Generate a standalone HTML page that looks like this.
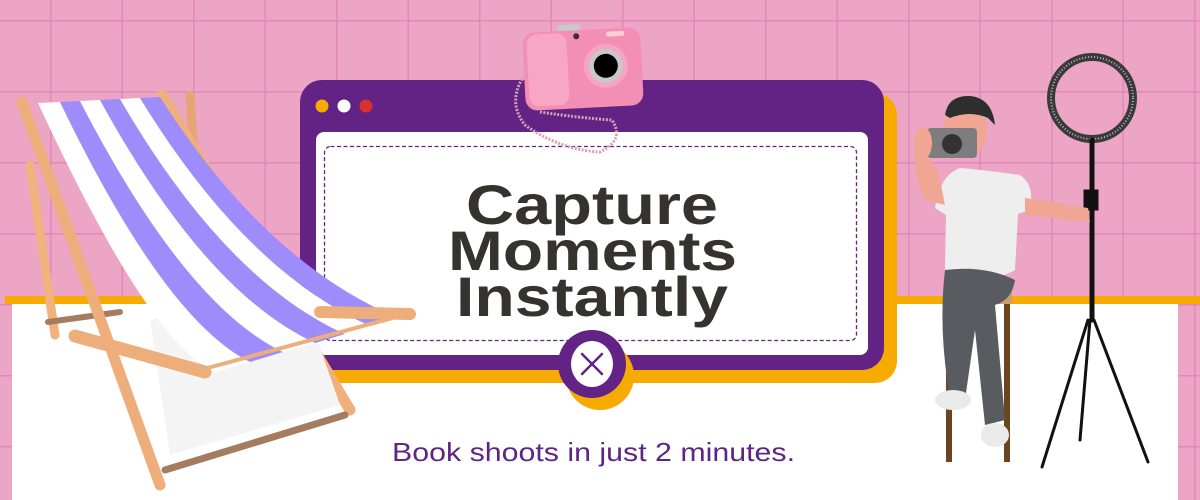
<!DOCTYPE html>
<html><head><meta charset="utf-8"><style>
html,body{margin:0;padding:0;width:1200px;height:500px;overflow:hidden;background:#eda5c6}
svg{display:block}
</style></head><body>
<svg width="1200" height="500" viewBox="0 0 1200 500" xmlns="http://www.w3.org/2000/svg">
<defs>
<pattern id="grid" x="50" y="20" width="71.5" height="71" patternUnits="userSpaceOnUse">
<rect width="71.5" height="71" fill="#eda5c6"/>
<path d="M0 0V71M0 0H71.5" stroke="#e388b8" stroke-width="3"/>
</pattern>
</defs>
<rect width="1200" height="500" fill="url(#grid)"/>
<rect x="5" y="296" width="1195" height="8" fill="#f7ab00"/>
<rect x="12" y="304" width="1166" height="196" fill="#ffffff"/>

<rect x="313" y="93" width="584" height="290" rx="22" fill="#f7ab00"/>
<rect x="300" y="80" width="584" height="290" rx="22" fill="#622384"/>
<circle cx="322" cy="106" r="6.5" fill="#f7ab00"/>
<circle cx="344" cy="106" r="6.5" fill="#ffffff"/>
<circle cx="366" cy="106" r="6.5" fill="#d9302c"/>
<rect x="316" y="132" width="552" height="223" rx="8" fill="#ffffff"/>
<rect x="324.5" y="146.5" width="532" height="194" rx="6" fill="none" stroke="#622384" stroke-width="1.3" stroke-dasharray="4 2.5"/>
<circle cx="600" cy="376" r="34" fill="#f7ab00"/>
<circle cx="592" cy="364" r="34" fill="#622384"/>
<ellipse cx="592" cy="364" rx="21" ry="23" fill="#ffffff"/>
<path d="M582 354L602 374M602 354L582 374" stroke="#622384" stroke-width="2.5" stroke-linecap="round"/>

<g font-family="Liberation Sans, sans-serif" font-weight="bold" font-size="56" fill="#36332f">
<text x="466" y="224" textLength="252" lengthAdjust="spacingAndGlyphs">Capture</text>
<text x="448" y="270" textLength="289" lengthAdjust="spacingAndGlyphs">Moments</text>
<text x="456" y="316" textLength="272" lengthAdjust="spacingAndGlyphs">Instantly</text>
</g>

<text x="392" y="461" textLength="403" lengthAdjust="spacingAndGlyphs" font-family="Liberation Sans, sans-serif" font-size="26" fill="#5e2585">Book shoots in just 2 minutes.</text>

<g transform="rotate(-3 583 70)">
<rect x="560" y="24" width="22" height="8" rx="3" fill="#c9c9cc"/>
<rect x="524" y="30" width="118" height="78" rx="12" fill="#f38fb4"/>
<rect x="528" y="32" width="40" height="72" rx="10" fill="#f7a7c4"/>
<rect x="608" y="33" width="18" height="5" rx="2" fill="#fbcfd6"/>
<circle cx="578" cy="36" r="3" fill="#333"/>
<circle cx="606" cy="67" r="22" fill="#f7a3c2"/>
<circle cx="606" cy="67" r="17" fill="#c8c8cc"/>
<circle cx="606" cy="67" r="12" fill="#000"/>
</g>
<path d="M528 70 Q505 100 525 125 Q560 150 600 152 Q625 140 612 120 Q580 118 540 112" fill="none" stroke="#d9a0b0" stroke-width="3" stroke-dasharray="2 1.5"/>

<g stroke-linecap="round">
<line x1="190" y1="95" x2="210" y2="415" stroke="#e6a673" stroke-width="9"/>
<line x1="30" y1="165" x2="55" y2="335" stroke="#f1b27e" stroke-width="9"/>
<line x1="48" y1="322" x2="120" y2="312" stroke="#a57c60" stroke-width="6"/>
<line x1="162" y1="95" x2="350" y2="410" stroke="#f0b07d" stroke-width="11"/>
<line x1="165" y1="470" x2="345" y2="415" stroke="#a57c60" stroke-width="7"/>
<polygon points="150,320 300,290 340,405 170,455" fill="#f4f4f4"/>
</g>
<g>
<path d="M38 103 Q150 345 215 372 L250 362 Q165 320 60 102Z" fill="#ffffff"/>
<path d="M60 102 Q165 320 250 362 L283 352 Q185 305 80 101Z" fill="#9e8cfb"/>
<path d="M80 101 Q185 305 283 352 L315 343 Q205 292 100 100Z" fill="#ffffff"/>
<path d="M100 100 Q205 292 315 343 L345 334 Q225 280 120 99Z" fill="#9e8cfb"/>
<path d="M120 99 Q225 280 345 334 L370 326 Q245 270 140 98Z" fill="#ffffff"/>
<path d="M140 98 Q245 270 370 326 L398 318 Q265 262 160 97Z" fill="#9e8cfb"/>
</g>
<g stroke-linecap="round">
<line x1="22" y1="102" x2="160" y2="485" stroke="#eeae7b" stroke-width="11"/>
<line x1="75" y1="336" x2="205" y2="372" stroke="#eeae7b" stroke-width="13"/>
<line x1="320" y1="312" x2="410" y2="314" stroke="#eeae7b" stroke-width="12"/>
<line x1="200" y1="370" x2="400" y2="316" stroke="#eeae7b" stroke-width="4"/>
</g>

<circle cx="1092" cy="98" r="41" fill="none" stroke="#3a3a3a" stroke-width="8"/>
<circle cx="1092" cy="98" r="41" fill="none" stroke="#bbbbbb" stroke-width="2" stroke-dasharray="1 2"/>
<g stroke="#111" stroke-linecap="round" fill="none">
<line x1="1092" y1="140" x2="1092" y2="320" stroke-width="5"/>
<line x1="1088" y1="320" x2="1042" y2="467" stroke-width="3"/>
<line x1="1094" y1="320" x2="1148" y2="462" stroke-width="3"/>
<line x1="1090" y1="320" x2="1080" y2="440" stroke-width="3"/>
<rect x="1084" y="190" width="14" height="20" fill="#111"/>
</g>
<g>
<rect x="946" y="300" width="6" height="162" fill="#6b4420"/>
<rect x="1004" y="300" width="6" height="162" fill="#6b4420"/>
<rect x="990" y="290" width="22" height="14" fill="#c9a068"/>
<path d="M960 168 Q985 170 1020 175 Q1035 185 1030 210 L1018 214 L1015 270 Q990 285 945 270 L946 215 L935 208 Q940 175 960 168Z" fill="#eeeeee"/>
<path d="M1025 198 L1088 208 L1090 222 L1025 215Z" fill="#f1a593"/>
<path d="M945 270 Q985 265 1015 280 Q1012 300 995 305 L1005 420 L985 425 L975 330 L965 400 L950 398 Q938 330 945 270Z" fill="#585c61"/>
<ellipse cx="953" cy="400" rx="18" ry="10" fill="#eaeaea"/>
<ellipse cx="995" cy="435" rx="14" ry="12" fill="#eaeaea"/>
<ellipse cx="965" cy="130" rx="22" ry="28" fill="#f1a593"/>
<path d="M945 115 Q948 95 970 96 Q992 98 995 125 L988 118 Q970 110 950 118Z" fill="#2e2e2e"/>
<path d="M915 140 Q912 175 925 200 L945 205 L938 170Z" fill="#f1a593"/>
<rect x="927" y="128" width="50" height="30" rx="4" fill="#7d7d80"/>
<circle cx="952" cy="144" r="10" fill="#333"/>
<ellipse cx="923" cy="143" rx="9" ry="16" fill="#f1a593"/>
</g>
</svg>
</body></html>
